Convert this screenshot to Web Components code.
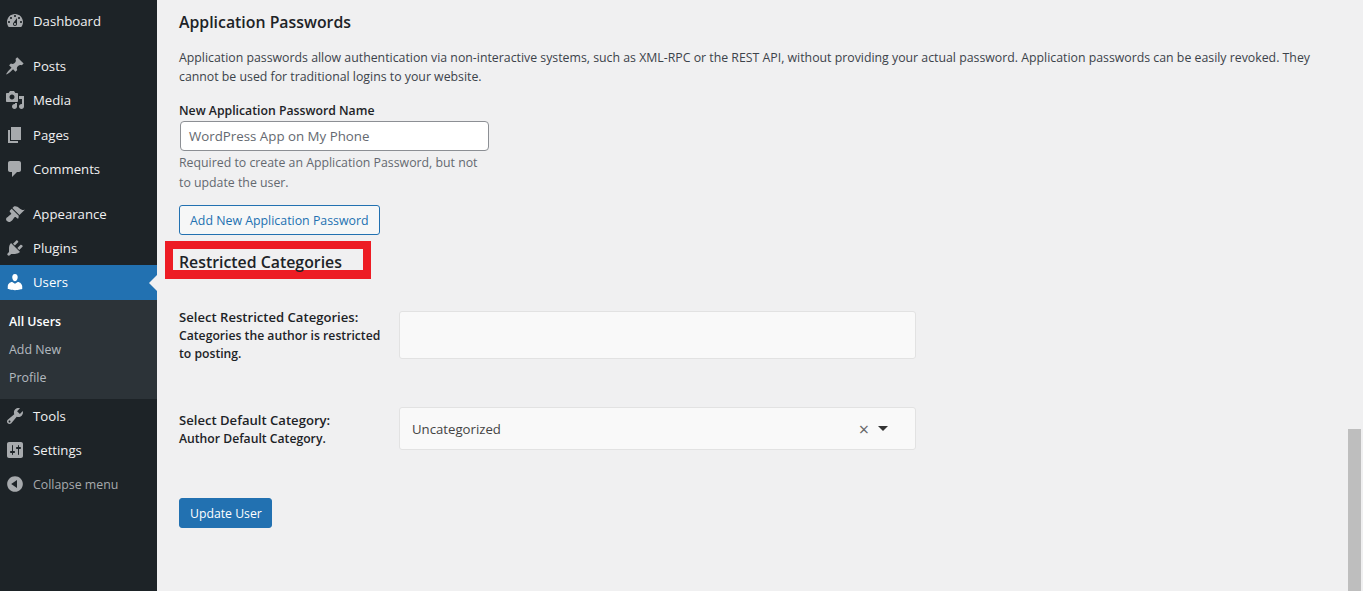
<!DOCTYPE html>
<html lang="en"><head><meta charset="utf-8"><title>Edit User</title>
<style>
html,body{margin:0;height:591px;overflow:hidden;background:#f0f0f1}
body{display:flex;font-family:"Open Sans","Noto Sans",sans-serif;font-size:13px;color:#3c434a}
</style></head><body>
<wp-sidebar>
  <wp-menu-item icon="dashboard">Dashboard</wp-menu-item>
  <wp-menu-item icon="post" sep>Posts</wp-menu-item>
  <wp-menu-item icon="media" tall>Media</wp-menu-item>
  <wp-menu-item icon="page">Pages</wp-menu-item>
  <wp-menu-item icon="comments">Comments</wp-menu-item>
  <wp-menu-item icon="appearance" sep>Appearance</wp-menu-item>
  <wp-menu-item icon="plugins">Plugins</wp-menu-item>
  <wp-menu-item icon="users" current tall>Users</wp-menu-item>
  <wp-submenu><wp-sub-item current>All Users</wp-sub-item><wp-sub-item>Add New</wp-sub-item><wp-sub-item>Profile</wp-sub-item></wp-submenu>
  <wp-menu-item icon="tools">Tools</wp-menu-item>
  <wp-menu-item icon="settings">Settings</wp-menu-item>
  <wp-menu-item icon="collapse" muted>Collapse menu</wp-menu-item>
</wp-sidebar>
<wp-main>
  <wp-app-passwords></wp-app-passwords>
  <wp-restricted></wp-restricted>
  <wp-button primary style="margin-top:48px">Update User</wp-button>
</wp-main>
<wp-scrollbar></wp-scrollbar>
<script>
const ICONS={
dashboard:'M3.76 16h12.48c1.1-1.37 1.76-3.11 1.76-5 0-4.42-3.58-8-8-8s-8 3.58-8 8c0 1.89.66 3.63 1.76 5zM10 4c.55 0 1 .45 1 1s-.45 1-1 1-1-.45-1-1 .45-1 1-1zM6 6c.55 0 1 .45 1 1s-.45 1-1 1-1-.45-1-1 .45-1 1-1zm8 0c.55 0 1 .45 1 1s-.45 1-1 1-1-.45-1-1 .45-1 1-1zm-5.37 5.55L12 7v6c0 1.1-.9 2-2 2s-2-.9-2-2c0-.57.24-1.08.63-1.45zM4 10c.55 0 1 .45 1 1s-.45 1-1 1-1-.45-1-1 .45-1 1-1zm12 0c.55 0 1 .45 1 1s-.45 1-1 1-1-.45-1-1 .45-1 1-1zm-5 3c0-.55-.45-1-1-1s-1 .45-1 1 .45 1 1 1 1-.45 1-1z',
post:'M10.44 3.02l1.82-1.82 6.36 6.35-1.83 1.82c-1.05-.68-2.48-.57-3.41.36l-.75.75c-.92.93-1.04 2.35-.35 3.41l-1.83 1.82-2.41-2.41-2.8 2.79c-.42.42-3.38 2.71-3.8 2.29s1.86-3.39 2.28-3.81l2.79-2.79L4.1 9.36l1.83-1.82c1.05.69 2.48.57 3.4-.36l.75-.75c.93-.92 1.05-2.35.36-3.41z',
media:'M13 11V4c0-.55-.45-1-1-1h-1.67L9 1H5L3.67 3H2c-.55 0-1 .45-1 1v7c0 .55.45 1 1 1h10c.55 0 1-.45 1-1zM7 4.5c1.38 0 2.5 1.12 2.5 2.5S8.38 9.5 7 9.5 4.5 8.38 4.5 7 5.62 4.5 7 4.5zM14 6h5v10.5c0 1.38-1.12 2.5-2.5 2.5S14 17.88 14 16.5s1.12-2.5 2.5-2.5c.17 0 .34.02.5.05V9h-3V6zm-4 8.05V13h2v3.5c0 1.38-1.12 2.5-2.5 2.5S7 17.88 7 16.5 8.12 14 9.5 14c.17 0 .34.02.5.05z',
page:'M6 15V2h10v13H6zm-1 1h8v2H3V5h2v11z',
comments:'M5 2h9c1.1 0 2 .9 2 2v7c0 1.1-.9 2-2 2h-2l-5 5v-5H5c-1.1 0-2-.9-2-2V4c0-1.1.9-2 2-2z',
appearance:'M14.48 11.06L7.41 3.99l1.5-1.5c.5-.56 2.3-.47 3.51.32 1.21.8 1.43 1.28 2.91 2.1 1.18.64 2.45 1.26 4.45.85zm-.71.71L6.7 4.7 4.93 6.47c-.39.39-.39 1.02 0 1.41l1.06 1.06c.39.39.39 1.03 0 1.42-.6.6-1.43 1.11-2.21 1.69-.35.26-.7.53-1.01.84C1.43 13.23.22 15.1 2 17c1.78 1.9 3.7.77 5.03-.55.31-.32.58-.67.84-1.02.58-.78 1.09-1.61 1.69-2.21.39-.39 1.02-.39 1.41 0l1.06 1.06c.39.39 1.02.39 1.41 0z',
plugins:'M13.11 4.36L9.87 7.6 8 5.73l3.24-3.24c.35-.34 1.05-.2 1.56.32.52.51.66 1.21.31 1.55zm-8 1.77l.91-1.12 9.01 9.01-1.19.84c-.71.71-2.63 1.16-3.82 1.16H6.14L4.9 17.26c-.59.59-1.54.59-2.12 0-.59-.58-.59-1.53 0-2.12l1.24-1.24v-3.88c0-1.13.4-3.19 1.09-3.89zm7.26 3.97l3.24-3.24c.34-.35 1.04-.21 1.55.31.52.51.66 1.21.31 1.55l-3.24 3.25z',
users:'M10 9.25c-2.27 0-2.73-3.44-2.73-3.44C7 4.02 7.82 2 9.97 2c2.16 0 2.98 2.02 2.71 3.81 0 0-.41 3.44-2.68 3.44zm0 2.57L12.72 10c2.39 0 4.52 2.33 4.52 4.53v2.49s-3.65 1.13-7.24 1.13c-3.65 0-7.24-1.13-7.24-1.13v-2.49c0-2.25 1.94-4.48 4.47-4.48z',
tools:'M16.68 9.77c-1.34 1.34-3.3 1.67-4.95.99l-5.41 6.52c-.99.99-2.59.99-3.58 0s-.99-2.59 0-3.57l6.52-5.42c-.68-1.65-.35-3.61.99-4.95 1.28-1.28 3.12-1.62 4.72-1.06l-2.89 2.89 2.82 2.82 2.86-2.87c.53 1.58.18 3.39-1.08 4.65zM3.81 16.21c.4.39 1.04.39 1.43 0 .4-.4.4-1.04 0-1.43-.39-.4-1.03-.4-1.43 0-.39.39-.39 1.03 0 1.43z',
settings:'M18 16V4c0-1.1-.9-2-2-2H4c-1.1 0-2 .9-2 2v12c0 1.1.9 2 2 2h12c1.1 0 2-.9 2-2zM8 11h1c.55 0 1 .45 1 1s-.45 1-1 1H8v1.5c0 .28-.22.5-.5.5s-.5-.22-.5-.5V13H6c-.55 0-1-.45-1-1s.45-1 1-1h1V5.5c0-.28.22-.5.5-.5s.5.22.5.5V11zm5-2h-1c-.55 0-1-.45-1-1s.45-1 1-1h1V5.5c0-.28.22-.5.5-.5s.5.22.5.5V7h1c.55 0 1 .45 1 1s-.45 1-1 1h-1v5.5c0 .28-.22.5-.5.5s-.5-.22-.5-.5V9z',
collapse:'M10 2.16c4.33 0 7.84 3.51 7.84 7.84s-3.51 7.84-7.84 7.84S2.16 14.33 2.16 10 5.71 2.16 10 2.16zm2 11.72V6.12L6.18 9.97z'};
const def=(n,html,extra={})=>{customElements.define(n,class extends HTMLElement{
  constructor(){super();this.attachShadow({mode:'open'}).innerHTML=html}
  connectedCallback(){extra.connected&&extra.connected(this)}
})};
const FONT='"Open Sans","Noto Sans",sans-serif';
def('wp-sidebar',`<style>:host{display:flex;flex-direction:column;box-sizing:border-box;width:157px;height:591px;flex:none;background:#1d2327;padding-top:4px;font:13.2px ${FONT}}</style><slot></slot>`);
def('wp-menu-item',`<style>
:host{display:flex;align-items:center;box-sizing:border-box;height:34px;flex:none;color:#f0f0f1;position:relative}
:host([tall]){height:35px;padding-bottom:1px}
:host([sep]){margin-top:11px}
svg{width:20px;height:20px;margin:0 8px 0 5px;fill:#a7aaad;flex:none}
:host([current]){background:#2271b1;color:#fff}
:host([current]) svg{fill:#fff}
:host([muted]){color:#a7aaad;font-size:12.35px}
.arrow{display:none;position:absolute;right:0;top:50%;margin-top:-8px;border:8px solid transparent;border-right-color:#f0f0f1;border-left:0}
:host([current]) .arrow{display:block}
</style><svg viewBox="0 0 20 20"><path/></svg><slot></slot><span class="arrow"></span>`,{connected(e){e.shadowRoot.querySelector('path').setAttribute('d',ICONS[e.getAttribute('icon')])}});
def('wp-submenu',`<style>:host{display:flex;flex-direction:column;flex:none;background:#2c3338;padding:7px 0 8px}</style><slot></slot>`);
def('wp-sub-item',`<style>:host{display:flex;align-items:center;height:28px;padding-left:9px;color:rgba(240,246,252,.7);font-size:12.4px}:host([current]){color:#fff;font-weight:600}</style><slot></slot>`);
def('wp-main',`<style>:host{display:flex;flex-direction:column;align-items:flex-start;flex:1;min-width:0;padding:13px 0 0 22px}</style><slot></slot>`);
def('wp-button',`<style>:host{display:inline-flex;align-items:center;box-sizing:border-box;height:30px;padding:0 10px;border:1px solid #2271b1;border-radius:3px;background:#f6f7f7;color:#2271b1;font:12.36px ${FONT};white-space:nowrap}
:host([primary]){background:#2271b1;color:#fff;font-size:12.25px;padding-right:9px}</style><slot></slot>`);
def('wp-app-passwords',`<style>
:host{display:block;color:#3c434a;font:12.32px/19px ${FONT}}
h2{margin:0;font-size:15.85px;line-height:18px;font-weight:600;color:#1d2327}
p{margin:17px 0 0;width:1150px}
label{display:block;margin-top:15px;color:#1d2327;font-weight:600;line-height:19px;font-size:12.25px}
.input{box-sizing:border-box;width:309px;height:30px;margin:1px 0 0 1px;border:1px solid #8c8f94;border-radius:4px;background:#fff;padding:0 8px;line-height:28px;font-size:13.3px;color:#646970}
.help{margin:2px 0 13px;width:310px;color:#646970;line-height:19.5px}
</style><h2>Application Passwords</h2>
<p>Application passwords allow authentication via non-interactive systems, such as XML-RPC or the REST API, without providing your actual password. Application passwords can be easily revoked. They cannot be used for traditional logins to your website.</p>
<label>New Application Password Name</label>
<div class="input">WordPress App on My Phone</div>
<div class="help">Required to create an Application Password, but not to update the user.</div>
<wp-button>Add New Application Password</wp-button>`);
def('wp-restricted',`<style>
:host{display:block;font:12.2px/18px ${FONT};color:#1d2327}
.mark{box-sizing:border-box;width:206px;height:38px;margin:6px 0 0 -14px;border:8px solid #ed1c24;border-bottom-width:9px;padding-left:6px}
h2{margin:0;font-size:15.85px;line-height:27px;font-weight:600;color:#1d2327;white-space:nowrap}
.row{display:grid;grid-template-columns:220px 517px;align-items:center}
.r1{margin-top:28px}.r2{margin-top:44px}
.l{width:205px;font-weight:600;padding-top:1px}
.l b{font-size:13.1px;font-weight:600;display:block;margin-bottom:1px}
.box{box-sizing:border-box;border:1px solid #e2e2e2;border-radius:3px;background:#f9f9f9;display:flex;align-items:center;justify-content:space-between;padding:0 27px 0 12px;font-size:13.2px;color:#444}
.r1 .box{height:48px}.r2 .box{height:43px}
.ctl{display:flex;align-items:center;gap:9px}
.x{color:#666;font-size:18px;line-height:16px}
.car{width:0;height:0;border:5px solid transparent;border-top-color:#333;border-bottom:0}
</style>
<div class="mark"><h2>Restricted Categories</h2></div>
<div class="row r1"><div class="l"><b>Select Restricted Categories:</b>Categories the author is restricted to posting.</div><div class="box"></div></div>
<div class="row r2"><div class="l"><b>Select Default Category:</b>Author Default Category.</div><div class="box"><span>Uncategorized</span><span class="ctl"><span class="x">×</span><span class="car"></span></span></div></div>`);
def('wp-scrollbar',`<style>:host{display:flex;flex-direction:column;justify-content:flex-end;box-sizing:border-box;flex:none;width:15px;height:591px;padding-right:2px}i{display:block;height:162px;background:#bebebe}</style><i></i>`);
</script>
</body></html>
